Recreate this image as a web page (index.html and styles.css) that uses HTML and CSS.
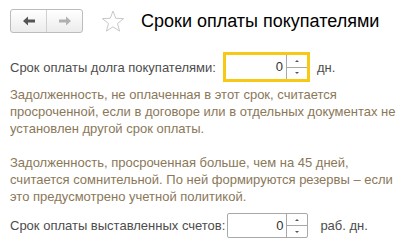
FILE: index.html
```html
<!DOCTYPE html>
<html lang="ru">
<head>
    <meta charset="UTF-8">
    <title>Сроки оплаты покупателями</title>
    <link rel="stylesheet" href="styles.css">
</head>
<body>
    <div class="header">
        <div class="nav">
            <span class="nav-btn">
                <svg width="12" height="10" viewBox="0 0 12 10"><path d="M0 5 L5 0.5 L5 3.5 L12 3.5 L12 6.5 L5 6.5 L5 9.5 Z" fill="#555"/></svg>
            </span>
            <span class="nav-btn">
                <svg width="12" height="10" viewBox="0 0 12 10"><path d="M12 5 L7 0.5 L7 3.5 L0 3.5 L0 6.5 L7 6.5 L7 9.5 Z" fill="#b0b0b0"/></svg>
            </span>
        </div>
        <svg class="star" width="24" height="23" viewBox="0 0 24 23">
            <path d="M12 1 L14.8 8.3 L22.6 8.6 L16.5 13.5 L18.6 21.1 L12 16.8 L5.4 21.1 L7.5 13.5 L1.4 8.6 L9.2 8.3 Z" fill="none" stroke="#c8c8c8" stroke-width="1" stroke-linejoin="round"/>
        </svg>
        <h1>Сроки оплаты покупателями</h1>
    </div>

    <div class="content">
        <div class="row row-first">
            <span class="label">Срок оплаты долга покупателями:</span>
            <div class="field focused">
                <span class="value">0</span>
                <span class="spin"><span class="up"></span><span class="down"></span></span>
            </div>
            <span class="unit">дн.</span>
        </div>

        <p class="note">Задолженность, не оплаченная в этот срок, считается просроченной, если в договоре или в отдельных документах не установлен другой срок оплаты.</p>
        <p class="note">Задолженность, просроченная больше, чем на 45 дней, считается сомнительной. По ней формируются резервы – если это предусмотрено учетной политикой.</p>

        <div class="row row-second">
            <span class="label">Срок оплаты выставленных счетов:</span>
            <div class="field">
                <span class="value">0</span>
                <span class="spin"><span class="up"></span><span class="down"></span></span>
            </div>
            <span class="unit">раб. дн.</span>
        </div>
    </div>
</body>
</html>
```

FILE: styles.css
```css
body {
    margin: 0;
    padding: 9px 10px;
    font-family: Arial, "Liberation Sans", sans-serif;
    font-size: 13px;
    background-color: #fff;
    color: #4d4d4d;
}
.header {
    display: flex;
    align-items: center;
    height: 24px;
}
.nav {
    display: flex;
    border: 1px solid #bcbcbc;
    border-radius: 3px;
    background: linear-gradient(#ffffff, #ececec);
    height: 22px;
}
.nav-btn {
    width: 35px;
    display: flex;
    align-items: center;
    justify-content: center;
}
.nav-btn + .nav-btn {
    border-left: 1px solid #d0d0d0;
}
.star {
    margin-left: 18px;
}
h1 {
    margin: 0 0 0 16px;
    font-size: 18px;
    font-weight: normal;
    color: #000;
}
.content {
    width: 390px;
}
.row {
    display: flex;
    align-items: center;
}
.row-first {
    margin-top: 19px;
}
.row-second {
    margin-top: 8px;
}
.row-first .field {
    margin-left: 7px;
}
.row-second .field {
    margin-left: 2px;
}
.field {
    box-sizing: border-box;
    width: 81px;
    height: 25px;
    border: 1px solid #a9a9a9;
    border-radius: 2px;
    display: flex;
    background: #fff;
}
.field.focused {
    width: 87px;
    height: 30px;
    border: 3px solid #f6c915;
    border-radius: 0;
}
.value {
    flex: 1;
    text-align: right;
    padding-right: 3px;
    line-height: 23px;
    color: #333;
}
.focused .value {
    line-height: 24px;
}
.spin {
    width: 20px;
    border-left: 1px solid #a9a9a9;
    display: flex;
    flex-direction: column;
}
.up, .down {
    flex: 1;
    position: relative;
}
.up {
    border-bottom: 1px solid #a9a9a9;
}
.up::after, .down::after {
    content: "";
    position: absolute;
    left: 8px;
    top: 50%;
    border-left: 2px solid transparent;
    border-right: 2px solid transparent;
}
.up::after {
    margin-top: -1px;
    border-bottom: 2px solid #555;
}
.down::after {
    margin-top: -1px;
    border-top: 2px solid #555;
}
.unit {
    margin-left: 7px;
}
.row-second .unit {
    margin-left: 12px;
}
.note {
    margin: 4px 0 17px;
    line-height: 17px;
    color: #8a7859;
}
.note + .note {
    margin-top: 0;
    margin-bottom: 0;
}
```
